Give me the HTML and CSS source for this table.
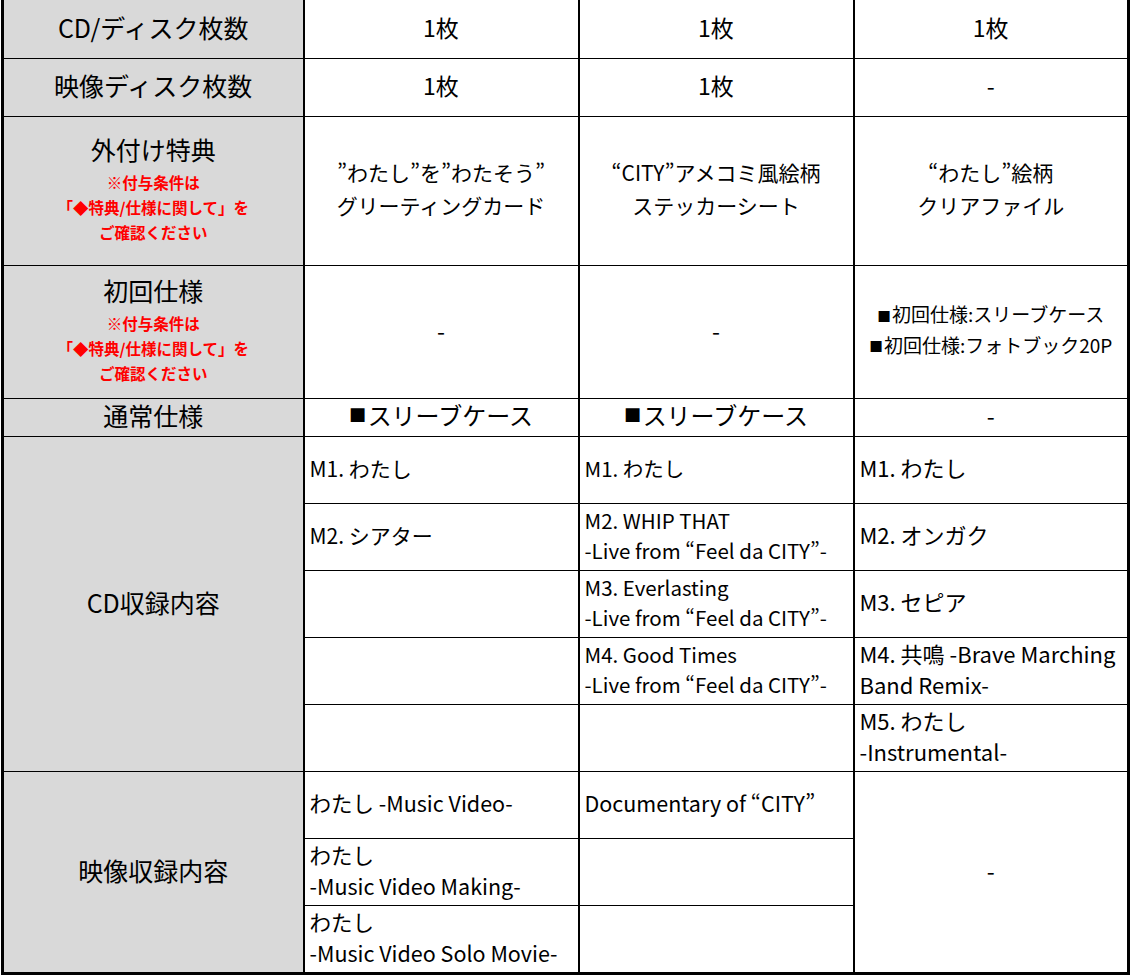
FILE: index.html
```html
<!DOCTYPE html>
<html lang="ja">
<head>
<meta charset="utf-8">
<title>仕様比較表</title>
<link rel="stylesheet" href="styles.css">
</head>
<body>
<table class="spec">
  <colgroup>
    <col class="c-label">
    <col class="c-data">
    <col class="c-data">
    <col class="c-data">
  </colgroup>
  <tbody>
    <tr class="r-disc">
      <th class="label">CD/ディスク枚数</th>
      <td class="center big">1枚</td>
      <td class="center big">1枚</td>
      <td class="center big">1枚</td>
    </tr>
    <tr class="r-disc">
      <th class="label">映像ディスク枚数</th>
      <td class="center big">1枚</td>
      <td class="center big">1枚</td>
      <td class="center big">-</td>
    </tr>
    <tr class="r-bonus">
      <th class="label">
        <div class="label-stack">
          <span class="label-title">外付け特典</span>
          <span class="note">※付与条件は<br>「◆特典/仕様に関して」を<br>ご確認ください</span>
        </div>
      </th>
      <td class="center mid">”わたし”を”わたそう”<br>グリーティングカード</td>
      <td class="center mid">“CITY”アメコミ風絵柄<br>ステッカーシート</td>
      <td class="center mid">“わたし”絵柄<br>クリアファイル</td>
    </tr>
    <tr class="r-first">
      <th class="label">
        <div class="label-stack">
          <span class="label-title">初回仕様</span>
          <span class="note">※付与条件は<br>「◆特典/仕様に関して」を<br>ご確認ください</span>
        </div>
      </th>
      <td class="center big">-</td>
      <td class="center big">-</td>
      <td class="center small"><span class="sq">■</span>初回仕様:スリーブケース<br><span class="sq">■</span>初回仕様:フォトブック20P</td>
    </tr>
    <tr class="r-normal">
      <th class="label">通常仕様</th>
      <td class="center sleeve"><span class="sq">■</span>スリーブケース</td>
      <td class="center sleeve"><span class="sq">■</span>スリーブケース</td>
      <td class="center big">-</td>
    </tr>
    <tr class="r-track">
      <th class="label" rowspan="5">CD収録内容</th>
      <td class="track">M1. わたし</td>
      <td class="track narrow">M1. わたし</td>
      <td class="track wide">M1. わたし</td>
    </tr>
    <tr class="r-track">
      <td class="track">M2. シアター</td>
      <td class="track narrow">M2. WHIP THAT<br>-Live from “Feel da CITY”-</td>
      <td class="track wide">M2. オンガク</td>
    </tr>
    <tr class="r-track">
      <td class="track"></td>
      <td class="track narrow">M3. Everlasting<br>-Live from “Feel da CITY”-</td>
      <td class="track wide">M3. セピア</td>
    </tr>
    <tr class="r-track">
      <td class="track"></td>
      <td class="track narrow">M4. Good Times<br>-Live from “Feel da CITY”-</td>
      <td class="track wide">M4. 共鳴 -Brave Marching<br>Band Remix-</td>
    </tr>
    <tr class="r-track">
      <td class="track"></td>
      <td class="track narrow"></td>
      <td class="track wide">M5. わたし<br>-Instrumental-</td>
    </tr>
    <tr class="r-track">
      <th class="label" rowspan="3">映像収録内容</th>
      <td class="track video">わたし -Music Video-</td>
      <td class="track video">Documentary of “CITY”</td>
      <td class="center big" rowspan="3">-</td>
    </tr>
    <tr class="r-track">
      <td class="track video">わたし<br>-Music Video Making-</td>
      <td class="track video"></td>
    </tr>
    <tr class="r-track-last">
      <td class="track video">わたし<br>-Music Video Solo Movie-</td>
      <td class="track video"></td>
    </tr>
  </tbody>
</table>
</body>
</html>
```

FILE: styles.css
```css
html, body {
  margin: 0;
  padding: 0;
  background: #ffffff;
}

body {
  font-family: "Noto Sans CJK JP", "Noto Sans", sans-serif;
  color: #000000;
  padding: 0 0 0 1px;
}

.spec {
  border-collapse: collapse;
  table-layout: fixed;
  width: 1128px;
  border-left: 3px solid #000;
  border-right: 3px solid #000;
  border-bottom: 3px solid #000;
}

.c-label { width: 301px; }
.c-data { width: 275px; }

.spec th,
.spec td {
  padding: 0 0 4px 0;
  border-top: 1px solid #000;
  border-bottom: 1px solid #000;
  border-left: 2px solid #000;
  border-right: 2px solid #000;
  vertical-align: middle;
  font-weight: normal;
}

.spec tr:first-child th,
.spec tr:first-child td {
  border-top: none;
}

.spec .label {
  background: #d9d9d9;
  text-align: center;
  font-size: 25px;
  line-height: 30px;
}

.label-stack {
  display: flex;
  flex-direction: column;
  align-items: center;
}

.label-title {
  font-size: 25px;
  line-height: 34px;
  margin-bottom: 4px;
}

.note {
  color: #ff0000;
  font-weight: bold;
  font-size: 15.5px;
  line-height: 25px;
}

.center {
  text-align: center;
}

.sq {
  font-size: 0.72em;
  vertical-align: 0.12em;
  margin-right: 0.08em;
}

.big {
  font-size: 23px;
  line-height: 30px;
}

.sleeve {
  font-size: 24px;
  line-height: 30px;
}

.mid {
  font-size: 21px;
  line-height: 33px;
}

.small {
  font-size: 19px;
  line-height: 30px;
}

.spec td.track {
  text-align: left;
  padding-left: 5px;
  font-size: 21px;
  line-height: 32px;
  white-space: nowrap;
}

.spec td.narrow {
  font-size: 20.5px;
  line-height: 30px;
}

.spec td.wide {
  font-size: 22px;
  line-height: 31px;
}

.spec td.video {
  font-size: 21.5px;
  line-height: 31px;
}

.r-disc { height: 58px; }
.r-bonus { height: 149px; }
.r-first { height: 133px; }
.r-normal { height: 38px; }
.r-track { height: 67px; }
.r-track-last { height: 65px; }
```
